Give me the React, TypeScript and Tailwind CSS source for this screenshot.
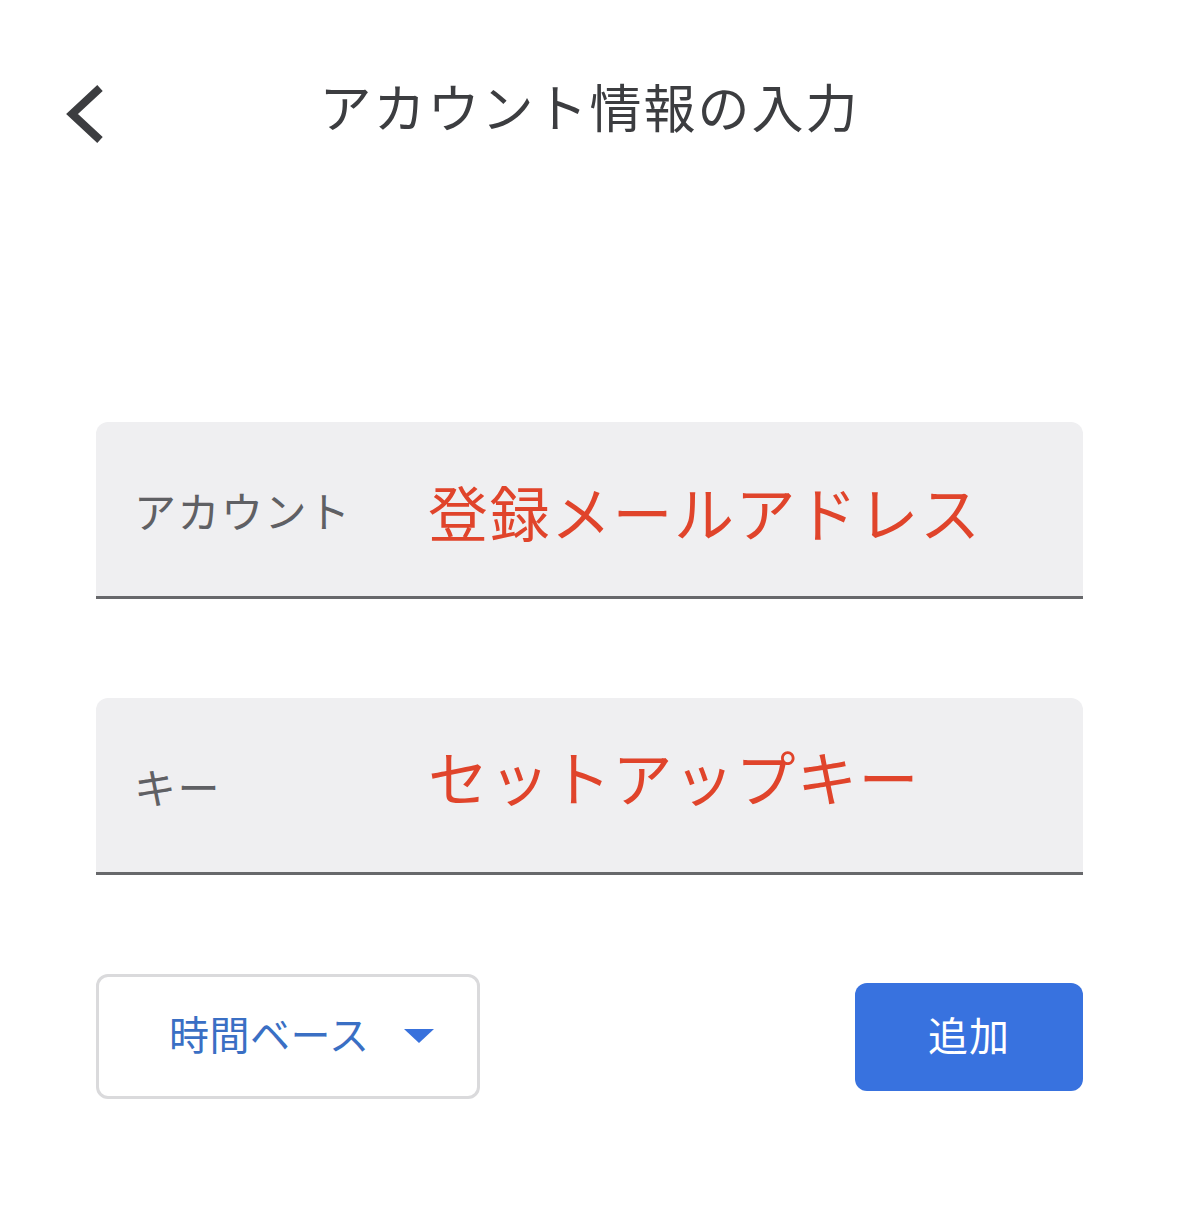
import React from "react";

const font = { fontFamily: '"Noto Sans CJK JP", "Noto Sans", sans-serif' };

function Field({ label, value, shift }: { label: string; value: string; shift: string }) {
  return (
    <div className="flex h-[177px] items-center rounded-t-[12px] border-b-[3px] border-[#67686b] bg-[#efeff1]">
      <div className="w-[332px] pl-[38px] text-[42px] tracking-[1.5px] text-[#5f6064]">{label}</div>
      <div className={`text-[60px] tracking-[1.5px] text-[#e0442b] ${shift}`}>{value}</div>
    </div>
  );
}

export default function App() {
  return (
    <div className="min-h-[1221px] w-[1179px] bg-white" style={font}>
      <div className="relative flex h-[220px] items-start justify-center pt-[68px]">
        <svg
          className="absolute left-[64px] top-[84px]"
          width="42"
          height="60"
          viewBox="0 0 42 60"
        >
          <path d="M36 4 L8 30 L36 56" fill="none" stroke="#3c3d40" strokeWidth="8" strokeLinecap="butt" strokeLinejoin="miter" />
        </svg>
        <div className="text-[52px] leading-[76px] tracking-[2px] text-[#3c3d40]">アカウント情報の入力</div>
      </div>
      <div className="px-[96px] pt-[202px]">
        <Field label="アカウント" value="登録メールアドレス" shift="pt-[4px]" />
        <div className="h-[99px]" />
        <Field label="キー" value="セットアップキー" shift="pb-[18px]" />
        <div className="flex items-start justify-between pt-[99px]">
          <div className="flex h-[125px] w-[384px] items-center rounded-[12px] border-[3px] border-[#dadadc] pb-[8px] pl-[70px]">
            <span className="text-[40px] tracking-[0.5px] text-[#3a6fc4]">時間ベース</span>
            <svg className="ml-[34px] mt-[6px]" width="30" height="16" viewBox="0 0 30 16">
              <path d="M0 1 L30 1 L15 15 Z" fill="#3871dc" />
            </svg>
          </div>
          <div className="mt-[9px] flex h-[108px] w-[228px] items-center justify-center rounded-[12px] bg-[#3872df] pb-[6px] text-[40px] tracking-[1px] text-white">
            追加
          </div>
        </div>
      </div>
    </div>
  );
}
